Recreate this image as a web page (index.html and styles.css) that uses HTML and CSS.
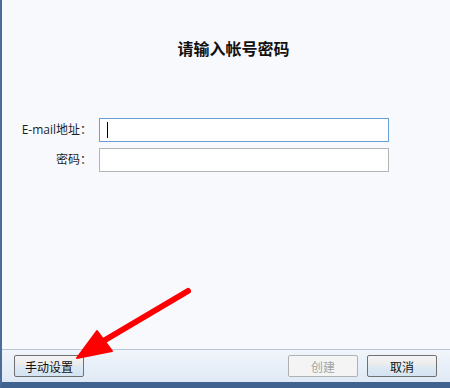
FILE: index.html
```html
<!DOCTYPE html>
<html lang="zh-CN">
<head>
    <meta charset="UTF-8">
    <title>请输入帐号密码</title>
    <link rel="stylesheet" href="styles.css">
</head>
<body>
    <div class="window">
        <div class="content">
            <h1 class="title">请输入帐号密码</h1>

            <div class="form">
                <label class="label" for="email">E-mail地址：</label>
                <div class="input focused"><span class="caret"></span></div>
                <label class="label" for="pwd">密码：</label>
                <div class="input"></div>
            </div>
        </div>

        <div class="footer">
            <button class="btn">手动设置</button>
            <div class="footer-right">
                <button class="btn disabled">创建</button>
                <button class="btn">取消</button>
            </div>
        </div>

        <!-- flèche rouge d'annotation -->
        <svg class="arrow" width="450" height="388" viewBox="0 0 450 388">
            <line x1="188" y1="291" x2="100" y2="343" stroke="#ff0000" stroke-width="6" stroke-linecap="round"/>
            <polygon points="77,358 97,331 112,351" fill="#ff0000" stroke="#ff0000" stroke-width="2" stroke-linejoin="round"/>
        </svg>
    </div>
</body>
</html>
```

FILE: styles.css
```css
* {
    margin: 0;
    padding: 0;
    box-sizing: border-box;
}

body {
    width: 450px;
    height: 388px;
    overflow: hidden;
    font-family: "Open Sans", "Noto Sans CJK SC", sans-serif;
    font-size: 12px;
    color: #1e1e1e;
}

.window {
    position: relative;
    height: 388px;
    display: flex;
    flex-direction: column;
    background-color: #f7f9fd;
    border-left: 2px solid #4b6d9c;
    border-bottom: 6px solid #3f628f;
}

.content {
    flex: 1;
}

.title {
    margin-top: 39px;
    font-family: "Noto Sans CJK SC", sans-serif;
    font-size: 16px;
    line-height: 18px;
    font-weight: bold;
    text-align: center;
    color: #111;
    padding-left: 15px;
}

.form {
    margin-top: 61px;
    display: grid;
    grid-template-columns: 90px 290px;
    grid-auto-rows: 24px;
    column-gap: 7px;
    row-gap: 6px;
    align-items: center;
}

.label {
    text-align: right;
    line-height: 22px;
}

.input {
    height: 24px;
    background-color: #fff;
    border: 1px solid #b4b4b4;
    position: relative;
}

.input.focused {
    border-color: #6b9fd9;
}

.caret {
    display: block;
    width: 1px;
    height: 16px;
    margin: 3px 0 0 7px;
    background-color: #000;
}

.footer {
    height: 33px;
    display: flex;
    justify-content: space-between;
    align-items: flex-start;
    padding: 5px 13px 0 12px;
    border-top: 1px solid #b8c5d5;
    background: linear-gradient(to bottom, #f1f5fb, #dfe9f5);
}

.footer-right {
    display: flex;
    gap: 9px;
}

.btn {
    width: 70px;
    height: 22px;
    font-family: "Noto Sans CJK SC", sans-serif;
    font-size: 12px;
    color: #111;
    border: 1px solid #707070;
    border-radius: 2px;
    background: linear-gradient(to bottom, #f4f4f4 0%, #ebebeb 45%, #dde9f4 55%, #d4e3f2 100%);
}

.btn.disabled {
    color: #a3a3a3;
    border-color: #adb2b5;
    background: #f4f4f4;
}

.arrow {
    position: absolute;
    left: -2px;
    top: 0;
    pointer-events: none;
}
```
